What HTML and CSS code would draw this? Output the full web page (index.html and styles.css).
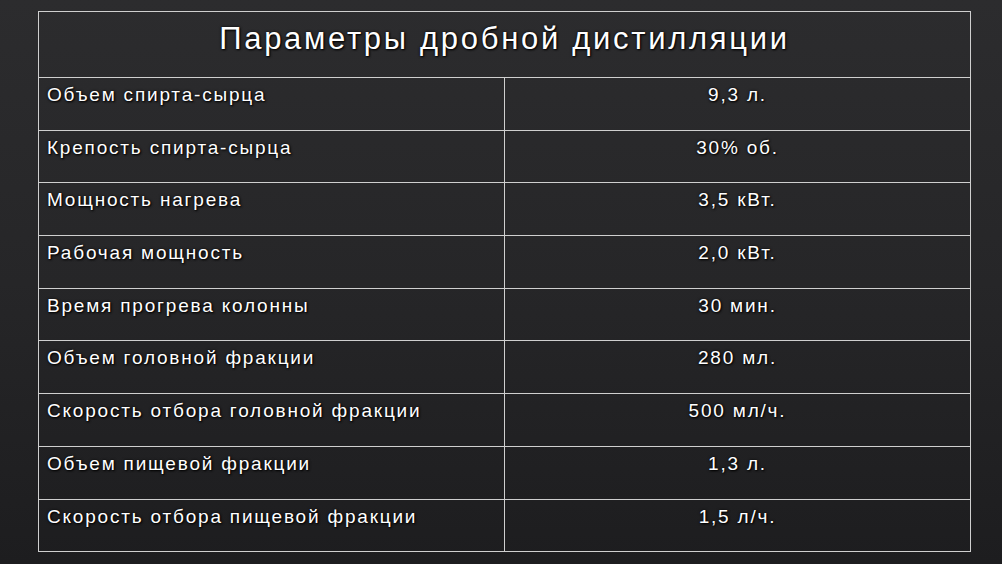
FILE: index.html
```html
<!DOCTYPE html>
<html lang="ru">
<head>
<meta charset="utf-8">
<link rel="stylesheet" href="styles.css">
</head>
<body>
<div class="page">
<table class="params">
<thead>
<tr><th colspan="2" class="title">Параметры дробной дистилляции</th></tr>
</thead>
<tbody>
<tr><td class="name">Объем спирта-сырца</td><td class="val">9,3 л.</td></tr>
<tr><td class="name">Крепость спирта-сырца</td><td class="val">30% об.</td></tr>
<tr><td class="name">Мощность нагрева</td><td class="val">3,5 кВт.</td></tr>
<tr><td class="name">Рабочая мощность</td><td class="val">2,0 кВт.</td></tr>
<tr><td class="name">Время прогрева колонны</td><td class="val">30 мин.</td></tr>
<tr><td class="name">Объем головной фракции</td><td class="val">280 мл.</td></tr>
<tr><td class="name">Скорость отбора головной фракции</td><td class="val">500 мл/ч.</td></tr>
<tr><td class="name">Объем пищевой фракции</td><td class="val">1,3 л.</td></tr>
<tr><td class="name">Скорость отбора пищевой фракции</td><td class="val">1,5 л/ч.</td></tr>
</tbody>
</table>
</div>
</body>
</html>
```
FILE: styles.css
```css
html, body {
  margin: 0;
  padding: 0;
  width: 1002px;
  height: 564px;
  overflow: hidden;
}
body {
  background: linear-gradient(180deg, #2c2c2e 0%, #262628 50%, #1d1d1f 100%);
  font-family: "Liberation Sans", Arial, sans-serif;
  color: #ffffff;
}
.page {
  padding: 11px 0 0 38px;
}
.params {
  border-collapse: collapse;
  width: 933px;
  table-layout: fixed;
}
.params th, .params td {
  border: 1.5px solid #cfcfcf;
  text-shadow: 1px 1px 2px #000, 0 0 3px rgba(0,0,0,0.8);
}
.title {
  height: 66px;
  box-sizing: border-box;
  padding: 0 0 12px 0;
  font-size: 31px;
  font-weight: 400;
  letter-spacing: 2.7px;
  text-align: center;
  vertical-align: middle;
  line-height: 1;
}
.params td {
  height: 52.7px;
  padding: 5px 0 0 8px;
  vertical-align: top;
  font-size: 19px;
  letter-spacing: 1.8px;
  line-height: 24px;
  box-sizing: border-box;
}
.params td.name { width: 466px; }
.params td.val { text-align: center; padding-left: 0; }
```
